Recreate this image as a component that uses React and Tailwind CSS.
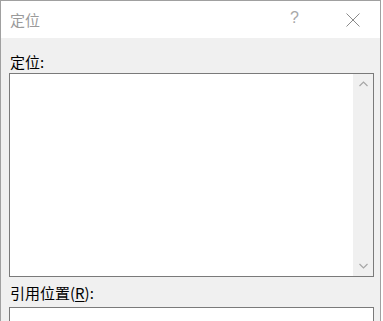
export default function App() {
  const font = { fontFamily: '"Noto Sans CJK SC", "Noto Sans", sans-serif' };
  return (
    <div className="w-[383px] h-[321px] bg-white overflow-hidden" style={font}>
      <div className="w-[381px] h-[321px] border-l border-t border-r border-[#a0a0a0] flex flex-col">
        <div className="h-[37px] bg-white flex items-center shrink-0 relative">
          <span className="ml-[9px] text-[15px] leading-none text-[#9a9a9a]">定位</span>
          <span className="absolute left-[289px] top-[9px] text-[16px] leading-none text-[#a8a8a8]" style={{ fontFamily: '"Liberation Sans", sans-serif' }}>?</span>
          <svg className="absolute left-[345px] top-[12px]" width="14" height="14" viewBox="0 0 14 14">
            <path d="M0.5 0.5 L13.5 13.5 M13.5 0.5 L0.5 13.5" stroke="#8a8a8a" strokeWidth="1" fill="none" />
          </svg>
        </div>
        <div className="flex-1 bg-[#f0f0f0] flex flex-col pl-[8px] pr-[6px]">
          <div className="h-[35px] flex items-end pb-[4px] shrink-0">
            <span className="ml-[1px] text-[15px] leading-none text-black">定位:</span>
          </div>
          <div className="h-[204px] w-[365px] border border-[#7a7a7a] bg-white flex justify-end shrink-0">
            <div className="w-[20px] bg-[#f0f0f0] flex flex-col items-center justify-between py-[7px]">
              <svg width="9" height="6" viewBox="0 0 9 6">
                <path d="M0.5 5 L4.5 1 L8.5 5" stroke="#a6a6a6" strokeWidth="1.2" fill="none" />
              </svg>
              <svg width="9" height="6" viewBox="0 0 9 6">
                <path d="M0.5 1 L4.5 5 L8.5 1" stroke="#a6a6a6" strokeWidth="1.2" fill="none" />
              </svg>
            </div>
          </div>
          <div className="h-[30px] flex items-center shrink-0">
            <span className="ml-[1px] text-[15px] leading-none text-black">
              引用位置(<span className="underline underline-offset-2">R</span>):
            </span>
          </div>
          <div className="h-[20px] w-[365px] border border-[#7a7a7a] border-b-0 bg-white shrink-0" />
        </div>
      </div>
    </div>
  );
}
